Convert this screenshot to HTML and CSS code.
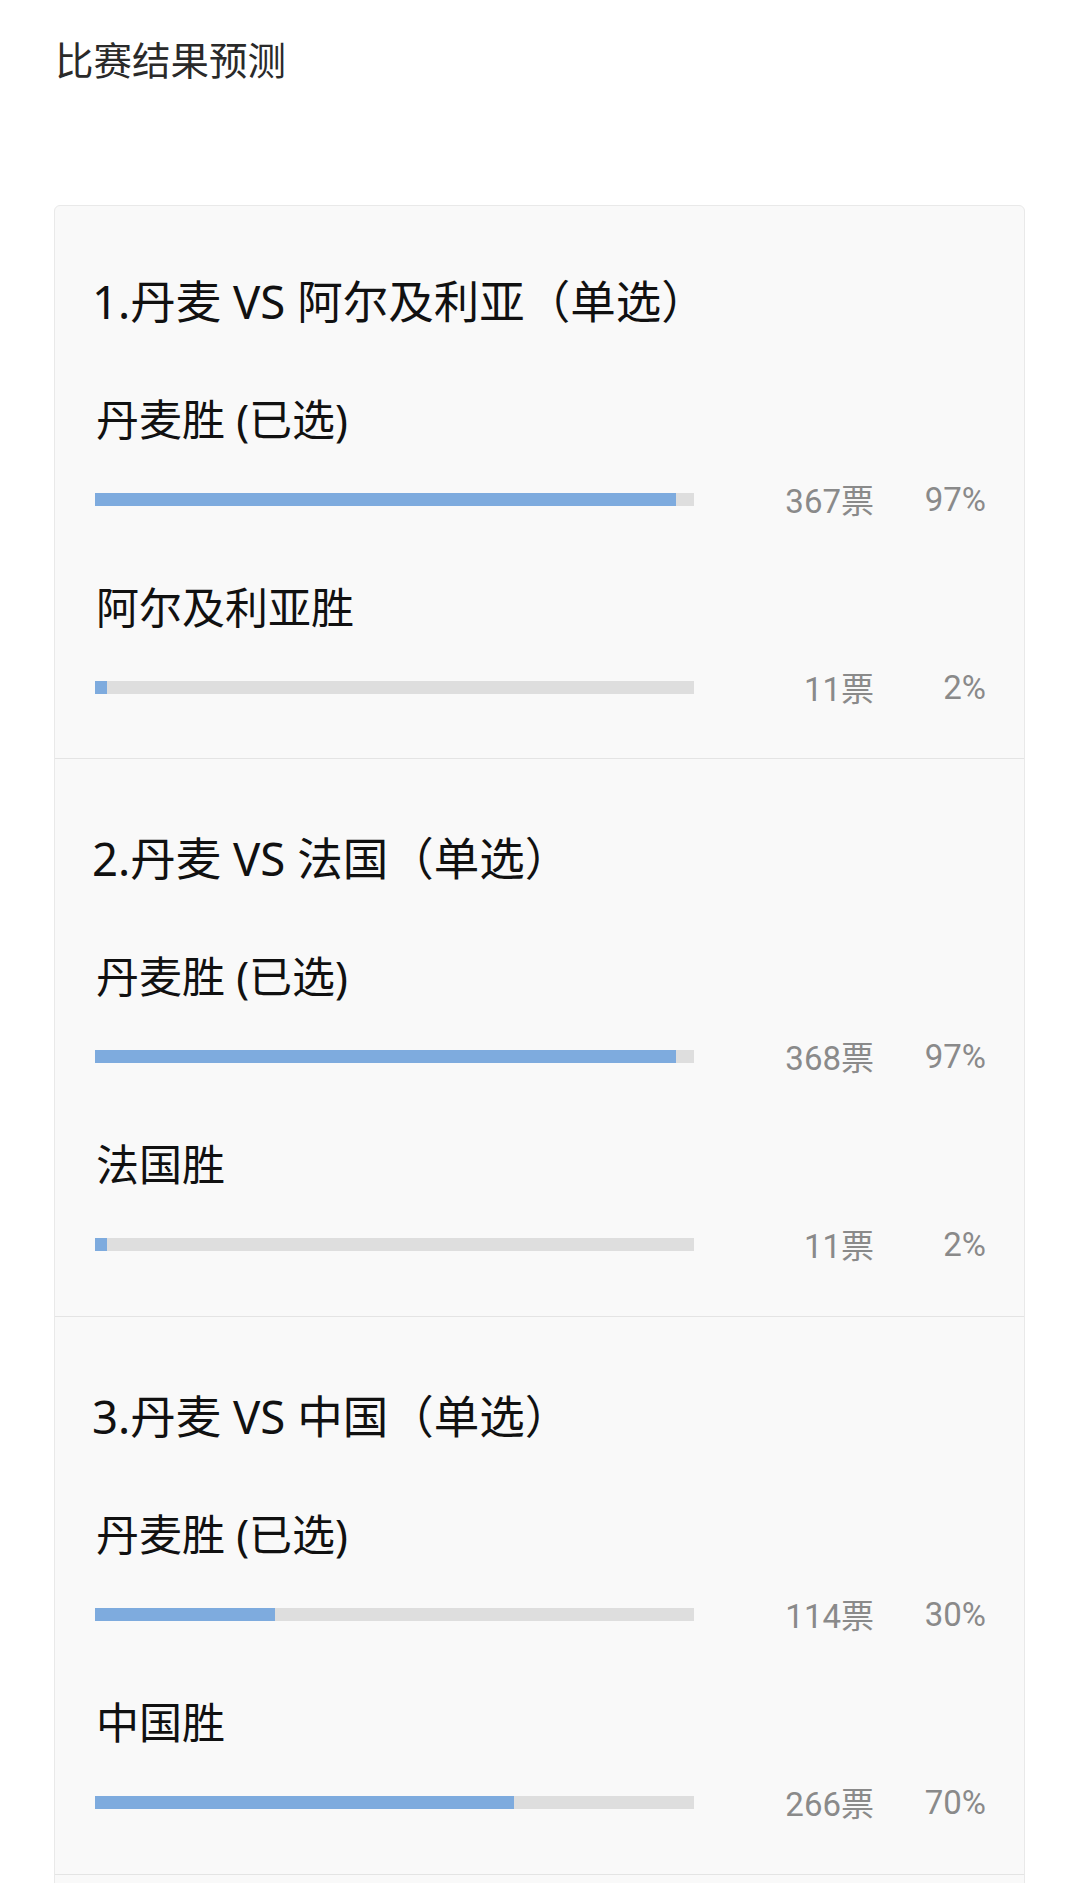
FILE: index.html
```html
<!DOCTYPE html>
<html lang="zh-CN">
<head>
    <meta charset="UTF-8">
    <meta name="viewport" content="width=device-width, initial-scale=1.0">
    <title>比赛结果预测</title>
    <link rel="stylesheet" href="styles.css">
</head>
<body>

    <div class="page-title">比赛结果预测</div>

    <div class="vote-card">

        <div class="question">
            <div class="question-title">1.丹麦 VS 阿尔及利亚（单选）</div>

            <div class="option">
                <div class="option-name">丹麦胜 (已选)</div>
                <div class="option-stats">
                    <div class="bar"><div class="bar-fill" style="width: 97%"></div></div>
                    <div class="count">367票</div>
                    <div class="percent">97%</div>
                </div>
            </div>

            <div class="option">
                <div class="option-name">阿尔及利亚胜</div>
                <div class="option-stats">
                    <div class="bar"><div class="bar-fill" style="width: 2%"></div></div>
                    <div class="count">11票</div>
                    <div class="percent">2%</div>
                </div>
            </div>
        </div>

        <div class="question">
            <div class="question-title">2.丹麦 VS 法国（单选）</div>

            <div class="option">
                <div class="option-name">丹麦胜 (已选)</div>
                <div class="option-stats">
                    <div class="bar"><div class="bar-fill" style="width: 97%"></div></div>
                    <div class="count">368票</div>
                    <div class="percent">97%</div>
                </div>
            </div>

            <div class="option">
                <div class="option-name">法国胜</div>
                <div class="option-stats">
                    <div class="bar"><div class="bar-fill" style="width: 2%"></div></div>
                    <div class="count">11票</div>
                    <div class="percent">2%</div>
                </div>
            </div>
        </div>

        <div class="question">
            <div class="question-title">3.丹麦 VS 中国（单选）</div>

            <div class="option">
                <div class="option-name">丹麦胜 (已选)</div>
                <div class="option-stats">
                    <div class="bar"><div class="bar-fill" style="width: 30%"></div></div>
                    <div class="count">114票</div>
                    <div class="percent">30%</div>
                </div>
            </div>

            <div class="option">
                <div class="option-name">中国胜</div>
                <div class="option-stats">
                    <div class="bar"><div class="bar-fill" style="width: 70%"></div></div>
                    <div class="count">266票</div>
                    <div class="percent">70%</div>
                </div>
            </div>
        </div>

    </div>

</body>
</html>
```

FILE: styles.css
```css
body {
    margin: 0;
    background-color: white;
    font-family: "Noto Sans", "Noto Sans CJK SC", sans-serif;
    color: #111;
}

.page-title {
    padding: 35px 55px 0 55px;
    font-size: 38.5px;
    line-height: 50px;
    color: #2a2a2a;
}

.vote-card {
    margin: 120px 55px 40px 54px;
    background-color: #f9f9f9;
    border: 1px solid #e9e9e9;
    border-radius: 6px;
    padding-bottom: 20px;
}

.question {
    padding: 69px 34px 52px 40px;
    border-bottom: 1px solid #e4e4e4;
}

.question:first-child {
    padding-top: 65px;
    padding-bottom: 51px;
}

.question-title {
    margin-left: -3px;
    font-size: 45.5px;
    line-height: 60px;
    color: #111;
}

.option {
    margin-top: 61px;
}

.option-name {
    font-size: 43px;
    line-height: 56px;
    padding-left: 1px;
    color: #111;
}

.option-stats {
    display: flex;
    align-items: center;
    height: 40px;
    margin-top: 31px;
}

.bar {
    width: 599px;
    height: 13px;
    background-color: #dedede;
    flex-shrink: 0;
}

.bar-fill {
    height: 100%;
    background-color: #7eabde;
}

.count {
    width: 180px;
    text-align: right;
    font-family: Roboto, "Noto Sans CJK SC", sans-serif;
    font-size: 33px;
    color: #8a8a8a;
}

.percent {
    width: 112px;
    text-align: right;
    font-family: Roboto, "Noto Sans CJK SC", sans-serif;
    font-size: 33px;
    color: #8a8a8a;
}
```
